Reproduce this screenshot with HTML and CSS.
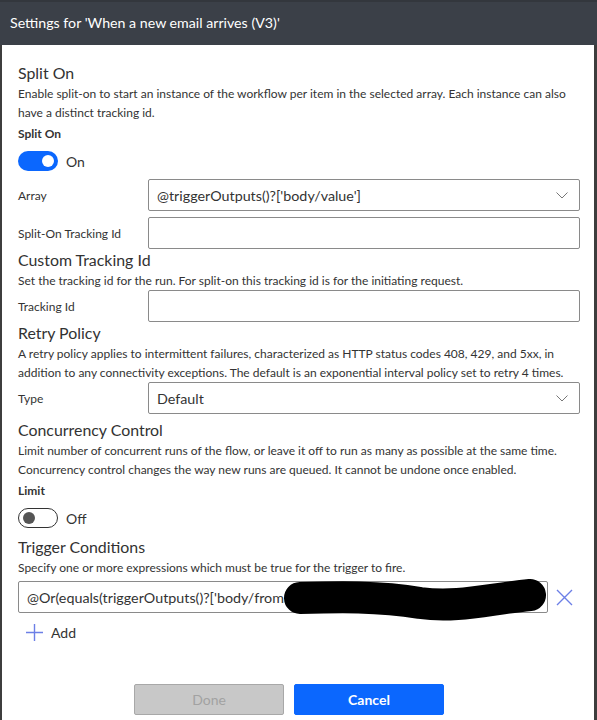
FILE: index.html
```html
<!DOCTYPE html>
<html>
<head>
<meta charset="utf-8">
<link rel="stylesheet" href="styles.css">
</head>
<body>
<div class="dialog">
  <div class="header">Settings for 'When a new email arrives (V3)'</div>
  <div class="content">
    <div class="sec-title">Split On</div>
    <div class="desc">Enable split-on to start an instance of the workflow per item in the selected array. Each instance can also have a distinct tracking id.</div>
    <div class="label-bold">Split On</div>
    <div class="toggle-row">
      <span class="toggle on"><span class="knob"></span></span><span class="toggle-text">On</span>
    </div>
    <div class="row first-row">
      <div class="row-label">Array</div>
      <div class="field select"><span class="field-text">@triggerOutputs()?['body/value']</span>
        <svg class="chev" width="12" height="7" viewBox="0 0 12 7"><path d="M0.5 0.5 L6 6 L11.5 0.5" fill="none" stroke="#777" stroke-width="1"/></svg>
      </div>
    </div>
    <div class="row">
      <div class="row-label">Split-On Tracking Id</div>
      <div class="field"></div>
    </div>

    <div class="sec-title">Custom Tracking Id</div>
    <div class="desc">Set the tracking id for the run. For split-on this tracking id is for the initiating request.</div>
    <div class="row after-desc">
      <div class="row-label">Tracking Id</div>
      <div class="field"></div>
    </div>

    <div class="sec-title">Retry Policy</div>
    <div class="desc">A retry policy applies to intermittent failures, characterized as HTTP status codes 408, 429, and 5xx, in addition to any connectivity exceptions. The default is an exponential interval policy set to retry 4 times.</div>
    <div class="row after-desc">
      <div class="row-label">Type</div>
      <div class="field select"><span class="field-text">Default</span>
        <svg class="chev" width="12" height="7" viewBox="0 0 12 7"><path d="M0.5 0.5 L6 6 L11.5 0.5" fill="none" stroke="#777" stroke-width="1"/></svg>
      </div>
    </div>

    <div class="sec-title sec-gap">Concurrency Control</div>
    <div class="desc">Limit number of concurrent runs of the flow, or leave it off to run as many as possible at the same time. Concurrency control changes the way new runs are queued. It cannot be undone once enabled.</div>
    <div class="label-bold">Limit</div>
    <div class="toggle-row">
      <span class="toggle off"><span class="knob"></span></span><span class="toggle-text">Off</span>
    </div>

    <div class="sec-title sec-gap2">Trigger Conditions</div>
    <div class="desc">Specify one or more expressions which must be true for the trigger to fire.</div>
    <div class="cond-row">
      <div class="field cond-field"><span class="field-text">@Or(equals(triggerOutputs()?['body/from</span>
        <svg class="redact" width="530" height="40" viewBox="0 0 530 40"><path d="M282 17 C 320 16, 360 15, 402 22 C 440 27, 470 18, 512 14" fill="none" stroke="#000" stroke-width="32" stroke-linecap="round"/></svg>
      </div>
      <svg class="x-icon" width="17" height="17" viewBox="0 0 17 17"><path d="M1 1 L16 16 M16 1 L1 16" stroke="#6c7fe6" stroke-width="1.4" fill="none"/></svg>
    </div>
    <div class="add-row">
      <svg class="plus" width="17" height="17" viewBox="0 0 17 17"><path d="M8.5 0 V17 M0 8.5 H17" stroke="#6c7fe6" stroke-width="1.4" fill="none"/></svg>
      <span class="add-text">Add</span>
    </div>
  </div>
  <div class="footer">
    <button class="btn done">Done</button>
    <button class="btn cancel">Cancel</button>
  </div>
</div>
</body>
</html>
```
FILE: styles.css
```css
html, body { margin: 0; padding: 0; background: #fff; }
body { font-family: Lato, "Open Sans", sans-serif; color: #333; }

.dialog {
  width: 597px;
  height: 720px;
  box-sizing: border-box;
  border-left: 2px solid #3d3d3d;
  border-right: 3px solid #3d3d3d;
  background: #fff;
  display: flex;
  flex-direction: column;
}

.header {
  height: 45px;
  box-sizing: border-box;
  background: #3b4048;
  border-top: 2px solid #33373d;
  color: #fff;
  font-size: 14.2px;
  line-height: 42px;
  margin: 0 -3px 0 -2px;
  padding-left: 10px;
}

.content {
  padding: 17px 14px 0 16px;
  display: flex;
  flex-direction: column;
}

.sec-title {
  font-size: 15.9px;
  line-height: 22px;
  color: #323232;
}
.sec-gap { margin-top: 5px; }
.sec-gap2 { margin-top: 8px; }

.desc {
  font-size: 12px;
  line-height: 19px;
  color: #333;
}

.label-bold {
  font-size: 12px;
  font-weight: bold;
  line-height: 20px;
  margin-top: 2px;
  color: #333;
}

.toggle-row {
  display: flex;
  align-items: center;
  margin-top: 7px;
  height: 20px;
}
.toggle {
  width: 40px;
  height: 20px;
  box-sizing: border-box;
  border-radius: 10px;
  position: relative;
  display: inline-block;
}
.toggle .knob {
  position: absolute;
  top: 3px;
  width: 12px;
  height: 12px;
  border-radius: 50%;
}
.toggle.on { background: #0b67fe; }
.toggle.on .knob { right: 4px; top: 4px; background: #fff; }
.toggle.off { border: 1px solid #333; background: #fff; }
.toggle.off .knob { left: 4px; background: #555; }
.toggle-text {
  font-size: 14px;
  margin-left: 8px;
  color: #333;
}

.row {
  display: flex;
  align-items: center;
  height: 32px;
  margin-top: 6px;
}
.first-row { margin-top: 8px; }
.row.after-desc { margin-top: 0; }
.row-label {
  width: 130px;
  font-size: 12px;
  color: #333;
}
.field {
  flex: 1;
  height: 32px;
  box-sizing: border-box;
  border: 1px solid #8a8a8a;
  border-radius: 2px;
  display: flex;
  align-items: center;
  padding: 0 8px;
  position: relative;
}
.field-text {
  font-size: 14.3px;
  color: #333;
  white-space: nowrap;
}
.select { justify-content: space-between; }
.chev { margin-right: 3px; }

.cond-row {
  display: flex;
  align-items: center;
  margin-top: 4px;
}
.cond-field { flex: 0 0 530px; }
.redact {
  position: absolute;
  left: -1px;
  top: -1px;
  overflow: visible;
}
.x-icon { margin-left: 8px; }

.add-row {
  display: flex;
  align-items: center;
  margin-top: 9px;
  height: 20px;
  padding-left: 8px;
}
.add-text {
  font-size: 14px;
  margin-left: 8px;
  color: #333;
}

.footer {
  margin-top: auto;
  display: flex;
  padding: 0 0 5px 132px;
  gap: 10px;
}
.btn {
  width: 150px;
  height: 31px;
  box-sizing: border-box;
  border-radius: 2px;
  font-family: Lato, "Open Sans", sans-serif;
  font-size: 14px;
  padding: 0;
}
.done {
  background: #c8c8c8;
  border: 1px solid #a8a8a8;
  color: #a2a2a2;
}
.cancel {
  background: #0b67fe;
  border: 1px solid #0b67fe;
  color: #fff;
  font-weight: bold;
}
```
